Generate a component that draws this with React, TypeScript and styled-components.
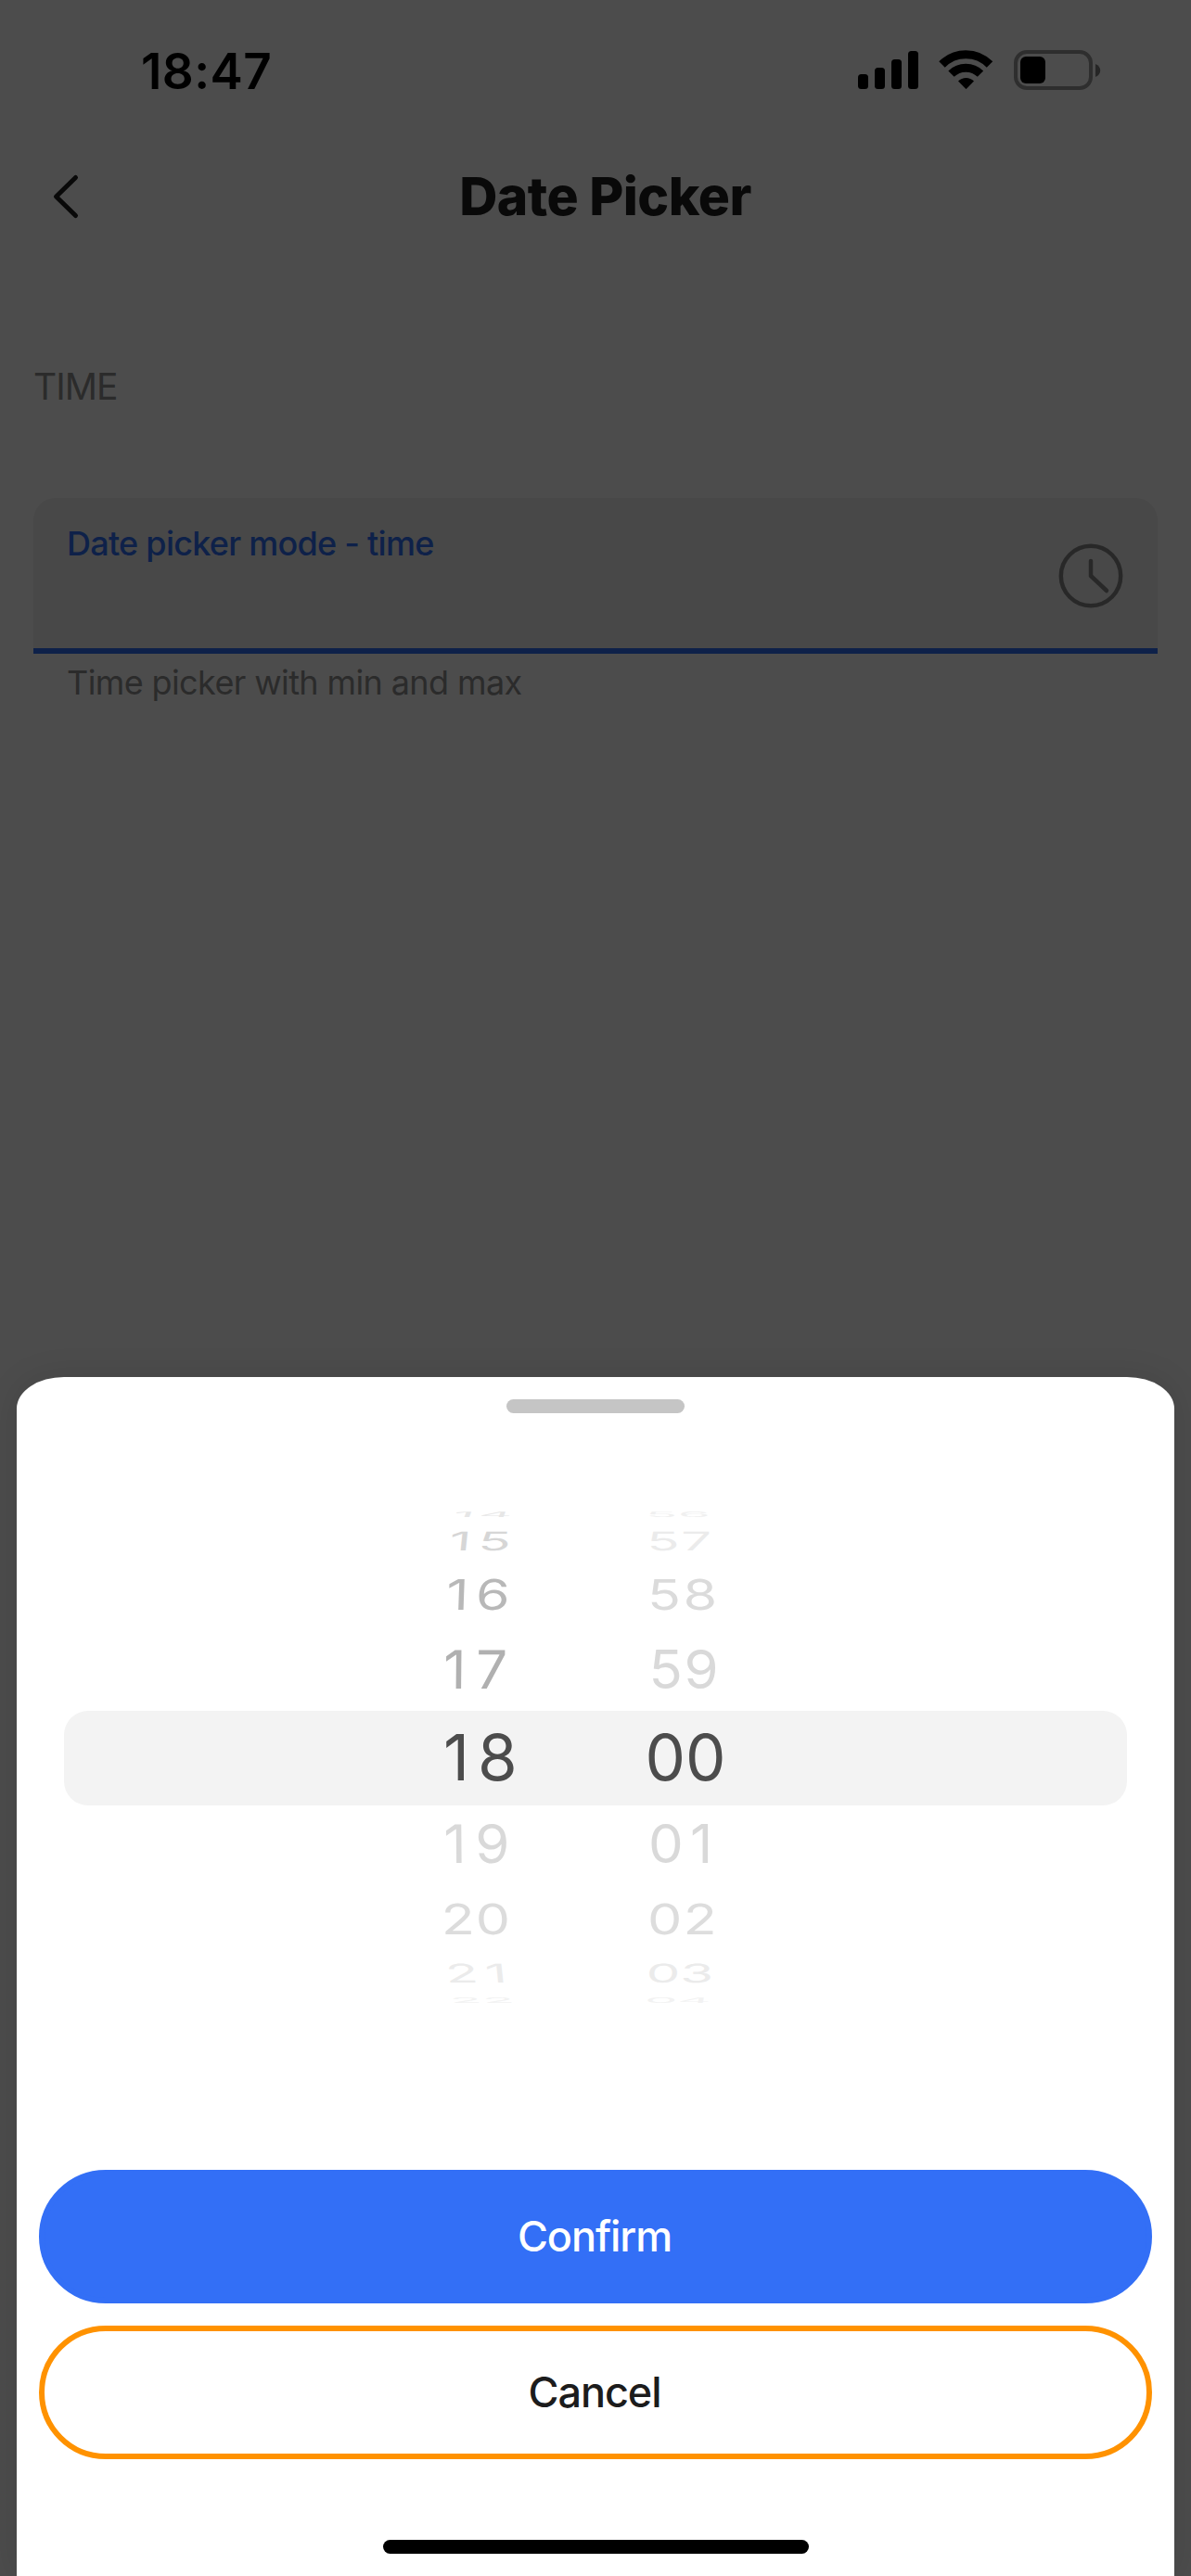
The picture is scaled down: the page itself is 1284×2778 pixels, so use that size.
import React from 'react';
import styled, { createGlobalStyle } from 'styled-components';

const GlobalStyle = createGlobalStyle`
  * { box-sizing: border-box; }
  body { margin: 0; background: #fff; font-family: Inter, "Liberation Sans", sans-serif; }
  button { font-family: inherit; }
`;

const Screen = styled.div`
  position: relative;
  display: flex;
  flex-direction: column;
  width: 1284px;
  height: 2778px;
  overflow: hidden;
  background: #ffffff;
`;

const StatusBar = styled.header`
  display: flex;
  justify-content: space-between;
  align-items: flex-start;
  height: 141px;
  padding: 45px 97px 0 152px;
`;

const Clock = styled.time`
  font-size: 53px;
  line-height: 64px;
  font-weight: 600;
  letter-spacing: 0.4px;
  color: #000;
`;

const StatusIcons = styled.div`
  display: flex;
  align-items: flex-start;
  padding-top: 9px;
`;

const NavBar = styled.nav`
  display: grid;
  grid-template-columns: 200px 1fr 200px;
  align-items: center;
  height: 142px;
`;

const BackButton = styled.button`
  display: flex;
  width: 40px;
  height: 52px;
  margin-left: 52px;
  padding: 0;
  border: 0;
  background: none;
`;

const Title = styled.h1`
  margin: 0 0 0 21px;
  text-align: center;
  font-size: 57px;
  line-height: 70px;
  font-weight: 800;
  letter-spacing: -0.53px;
  color: #1e1e1e;
`;

const Content = styled.main`
  display: flex;
  flex-direction: column;
  padding: 110px 36px 0;
`;

const SectionTitle = styled.h2`
  margin: 0 0 96px;
  font-size: 39px;
  line-height: 48px;
  font-weight: 400;
  letter-spacing: -1px;
  color: #8f8f8f;
`;

const Field = styled.div`
  display: flex;
  justify-content: space-between;
  align-items: center;
  height: 168px;
  padding: 5px 36px 0;
  border-radius: 24px 24px 0 0;
  border-bottom: 6px solid #306ff6;
  background: #f0f0f0;
`;

const FieldLabel = styled.label`
  align-self: flex-start;
  margin-top: 22px;
  font-size: 36px;
  line-height: 44px;
  font-weight: 500;
  letter-spacing: -0.74px;
  color: #306ff6;
`;

const Helper = styled.p`
  margin: 9px 0 0 36px;
  font-size: 36px;
  line-height: 44px;
  font-weight: 400;
  letter-spacing: -0.61px;
  color: #8f8f8f;
`;

const Scrim = styled.div`
  position: absolute;
  inset: 0;
  display: flex;
  flex-direction: column;
  justify-content: flex-end;
  padding: 0 18px;
  background: rgba(0, 0, 0, 0.7);
`;

const Sheet = styled.section`
  display: flex;
  flex-direction: column;
  align-items: center;
  height: 1293px;
  padding: 24px;
  border-radius: 51px 51px 0 0 / 34px 34px 0 0;
  background: #fff;
  box-shadow: 0 0 36px rgba(0, 0, 0, 0.1);
`;

const Handle = styled.div`
  width: 192px;
  height: 15px;
  border-radius: 8px;
  background: #c5c5c5;
`;

const Picker = styled.div`
  position: relative;
  display: flex;
  align-self: stretch;
  height: 648px;
  margin-top: 48px;
  padding: 0 0 2px 436px;
`;

const Selection = styled.div`
  position: absolute;
  left: 27px;
  right: 27px;
  top: 273px;
  height: 102px;
  border-radius: 26px;
  background: #f3f3f3;
`;

const Wheel = styled.div`
  position: relative;
  display: flex;
  flex-direction: column;
  justify-content: center;
  width: 217.5px;
`;

const WheelItem = styled.div<{ $h: number }>`
  display: flex;
  align-items: center;
  height: ${(p) => p.$h}px;
`;

const Digits = styled.span<{ $item: Item; $selected: boolean }>`
  flex: none;
  font-size: ${(p) => (p.$selected ? 69 : 62)}px;
  line-height: 80px;
  font-weight: 400;
  letter-spacing: ${(p) => p.$item.gap}px;
  color: ${(p) => p.$item.color};
  transform-origin: left center;
  transform: translateX(${(p) => p.$item.x}px)
    skewX(${(p) => p.$item.skew}deg)
    scale(${(p) => p.$item.sx}, ${(p) => p.$item.sy});
`;

const Actions = styled.div`
  display: flex;
  flex-direction: column;
  align-self: stretch;
  gap: 24px;
  margin-top: 120px;
`;

const Action = styled.button<{ $primary?: boolean }>`
  height: 144px;
  padding: 0 2px 0 0;
  border: 6px solid ${(p) => (p.$primary ? '#336ff6' : '#ff9200')};
  border-radius: 72px;
  background: ${(p) => (p.$primary ? '#336ff6' : '#fff')};
  color: ${(p) => (p.$primary ? '#fff' : '#1c1c1c')};
  font-size: 45px;
  line-height: 54px;
  font-weight: 500;
  letter-spacing: -1.1px;
`;

const HomeIndicator = styled.div`
  width: 459px;
  height: 15px;
  margin-top: auto;
  border-radius: 8px;
  background: #000;
`;

interface Item {
  text: string;
  x: number;
  gap: number;
  sx: number;
  sy: number;
  skew: number;
  color: string;
}

// Rows get shorter towards the ends, as on the face of a turning drum.
const ROW_HEIGHTS = [16, 42, 74, 88, 100, 88, 74, 42, 16];
const SELECTED_ROW = 4;

const HOURS: Item[] = [
  { text: '14', x: 11, gap: 5, sx: 0.904, sy: 0.13, skew: -20, color: '#e6e6e6' },
  { text: '15', x: 6.5, gap: 8.4, sx: 0.934, sy: 0.45, skew: -6, color: '#d6d6d6' },
  { text: '16', x: 3.3, gap: 8, sx: 0.953, sy: 0.73, skew: -2, color: '#b8b8b8' },
  { text: '17', x: 0.3, gap: 11, sx: 0.965, sy: 0.92, skew: -0.5, color: '#b0b0b0' },
  { text: '18', x: 0, gap: 9, sx: 1, sy: 1, skew: 0, color: '#4c4c4c' },
  { text: '19', x: 0.3, gap: 10, sx: 0.965, sy: 0.92, skew: 0.5, color: '#d9d9d9' },
  { text: '20', x: -2.2, gap: 1, sx: 0.953, sy: 0.73, skew: 1, color: '#dcdcdc' },
  { text: '21', x: 2.2, gap: 8, sx: 0.934, sy: 0.45, skew: 6, color: '#ebebeb' },
  { text: '22', x: 7, gap: 1, sx: 0.904, sy: 0.13, skew: 20, color: '#f2f2f2' },
];

const MINUTES: Item[] = [
  { text: '56', x: 0, gap: 1, sx: 0.904, sy: 0.13, skew: 12, color: '#f0f0f0' },
  { text: '57', x: 1.3, gap: 2.5, sx: 0.934, sy: 0.45, skew: 3, color: '#ebebeb' },
  { text: '58', x: 2, gap: 2.6, sx: 0.953, sy: 0.73, skew: 1, color: '#dbdbdb' },
  { text: '59', x: 3.5, gap: 1.6, sx: 0.965, sy: 0.92, skew: 0, color: '#d9d9d9' },
  { text: '00', x: 0, gap: 0, sx: 1, sy: 1, skew: 0, color: '#4c4c4c' },
  { text: '01', x: 3, gap: 7.6, sx: 0.965, sy: 0.92, skew: 0, color: '#d9d9d9' },
  { text: '02', x: 2, gap: 1.6, sx: 0.953, sy: 0.73, skew: -1, color: '#dddddd' },
  { text: '03', x: 0.8, gap: 0.3, sx: 0.934, sy: 0.45, skew: -3, color: '#ebebeb' },
  { text: '04', x: -0.8, gap: 0, sx: 0.904, sy: 0.13, skew: -12, color: '#f2f2f2' },
];

function WheelColumn({ items }: { items: Item[] }) {
  return (
    <Wheel>
      {items.map((item, i) => (
        <WheelItem key={item.text} $h={ROW_HEIGHTS[i]}>
          <Digits $item={item} $selected={i === SELECTED_ROW}>{item.text}</Digits>
        </WheelItem>
      ))}
    </Wheel>
  );
}

function StatusGlyphs() {
  return (
    <svg width="262" height="43" viewBox="0 0 262 43">
      <rect x="0" y="26" width="11" height="16" rx="3.5" />
      <rect x="18" y="19" width="11" height="23" rx="3.5" />
      <rect x="36" y="10" width="11" height="32" rx="3.5" />
      <rect x="54" y="1" width="11" height="41" rx="3.5" />
      <g fill="none" stroke="#000" strokeWidth="9">
        <path d="M90.5 15.5a36 36 0 0 1 51.5 0" />
        <path d="M100.5 25.6a22.5 22.5 0 0 1 31.5 0" />
      </g>
      <path d="M108 33.5a12 12 0 0 1 17 0l-8.1 8.2q-.4.4-.8 0z" />
      <rect x="170" y="2" width="81" height="39" rx="12" fill="none" stroke="#000" strokeOpacity=".4" strokeWidth="4" />
      <rect x="175" y="7" width="27" height="29" rx="6" />
      <path d="M256 15c7 3 7 11 0 14z" fillOpacity=".5" />
    </svg>
  );
}

export default function App() {
  return (
    <>
      <GlobalStyle />
      <Screen>
        <StatusBar>
          <Clock>18:47</Clock>
          <StatusIcons><StatusGlyphs /></StatusIcons>
        </StatusBar>
        <NavBar>
          <BackButton aria-label="Back">
            <svg width="40" height="52" viewBox="0 0 40 52" fill="none" stroke="#1e1e1e" strokeWidth="5" strokeLinecap="round" strokeLinejoin="round">
              <path d="M29.5 5.5L8.5 26l21 20.5" />
            </svg>
          </BackButton>
          <Title>Date Picker</Title>
        </NavBar>
        <Content>
          <SectionTitle>TIME</SectionTitle>
          <Field>
            <FieldLabel>Date picker mode - time</FieldLabel>
            <svg width="72" height="72" viewBox="0 0 72 72" fill="none" stroke="#888" strokeWidth="4.5" strokeLinecap="round" strokeLinejoin="round">
              <circle cx="36" cy="36" r="32.2" />
              <path d="M36 20v16l17 16" />
            </svg>
          </Field>
          <Helper>Time picker with min and max</Helper>
        </Content>
        <Scrim>
          <Sheet>
            <Handle />
            <Picker>
              <Selection />
              <WheelColumn items={HOURS} />
              <WheelColumn items={MINUTES} />
            </Picker>
            <Actions>
              <Action $primary>Confirm</Action>
              <Action>Cancel</Action>
            </Actions>
            <HomeIndicator />
          </Sheet>
        </Scrim>
      </Screen>
    </>
  );
}
